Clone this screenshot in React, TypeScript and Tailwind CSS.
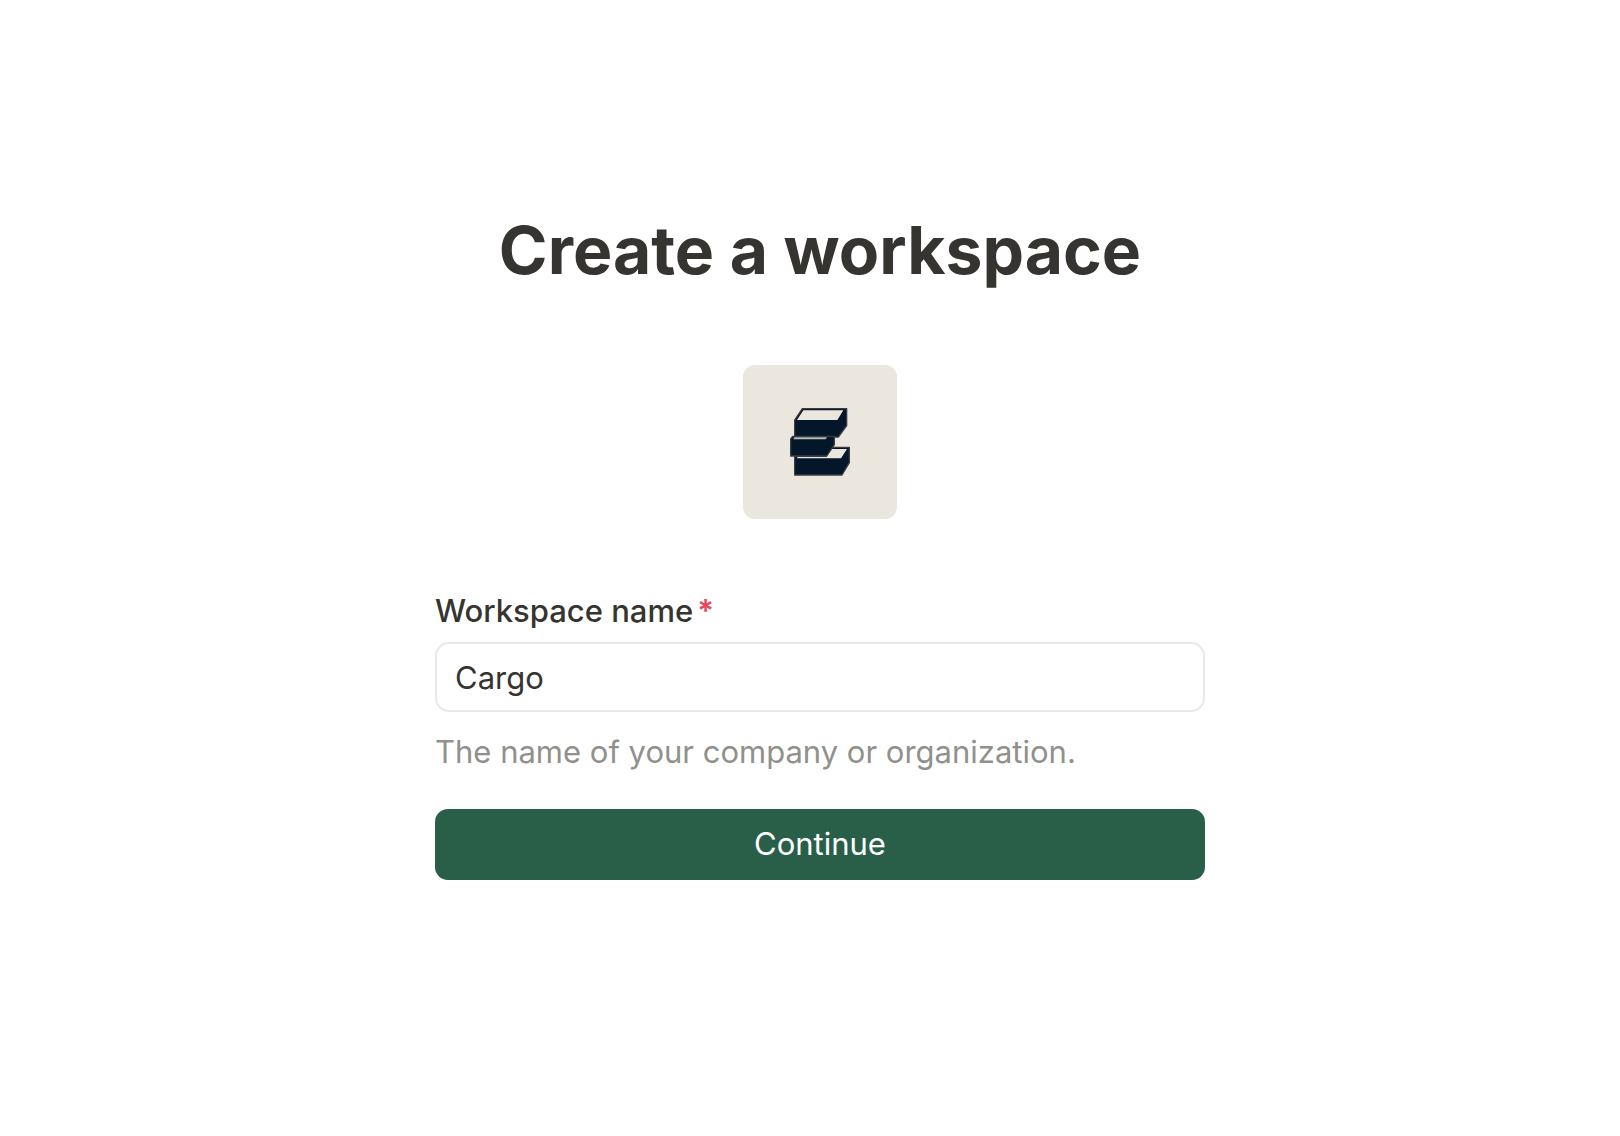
import { useState } from "react";

function WorkspaceLogo() {
  return (
    <svg viewBox="0 0 240 264" className="h-[88px] w-20" aria-hidden="true">
      <g stroke="#3a3b40" strokeWidth="4" strokeLinejoin="round" fill="#04162a">
        <path d="M44 176 L150 148 H208 V194 L186 231 H44 Z" />
        <path d="M155 153 H201 L183 181 H52 V176 H140 Z" fill="#ebe7df" stroke="none" />
        <path d="M67 32 H200 V83 L175 117 H44 V66 Z" />
        <path d="M70 37 H190 L172 66 H51 Z" fill="#ebe7df" stroke="none" />
        <path d="M38 115 H163 V140 L140 174 H32 V123 Z" />
        <path d="M43 118 H141 L137 124 H40 Z" fill="#b9bbb7" stroke="none" />
      </g>
    </svg>
  );
}

export default function App() {
  const [name, setName] = useState("Cargo");

  return (
    <main className="min-h-screen bg-white pt-[210px] pr-6 pb-12 pl-11 font-['Inter',sans-serif] text-[#353430]">
      <form
        className="mx-auto flex w-full max-w-[770px] flex-col"
        onSubmit={(event) => event.preventDefault()}
      >
        <h1 className="text-center text-[66px] leading-[80px] font-bold">Create a workspace</h1>

        <div className="mt-[75px] flex size-[154px] items-center justify-center self-center rounded-xl bg-[#ebe7df]">
          <WorkspaceLogo />
        </div>

        <label htmlFor="workspace-name" className="mt-[72px] flex gap-1 text-[31px] leading-10 font-medium">
          Workspace name
          <span className="font-semibold text-[#e5485d]">*</span>
        </label>
        <input
          id="workspace-name"
          type="text"
          required
          aria-describedby="workspace-name-hint"
          value={name}
          onChange={(event) => setName(event.target.value)}
          className="mt-[11px] h-[70px] w-full rounded-[14px] border-2 border-[#e9e9e9] px-[18px] text-[31px] outline-none focus:border-[#295f48]"
        />
        <p id="workspace-name-hint" className="mt-5 text-[31px] leading-10 text-[#91918c]">
          The name of your company or organization.
        </p>

        <button
          type="submit"
          className="mt-[37px] h-[71px] w-full rounded-[13px] bg-[#295f48] text-[31px] text-white"
        >
          Continue
        </button>
      </form>
    </main>
  );
}
